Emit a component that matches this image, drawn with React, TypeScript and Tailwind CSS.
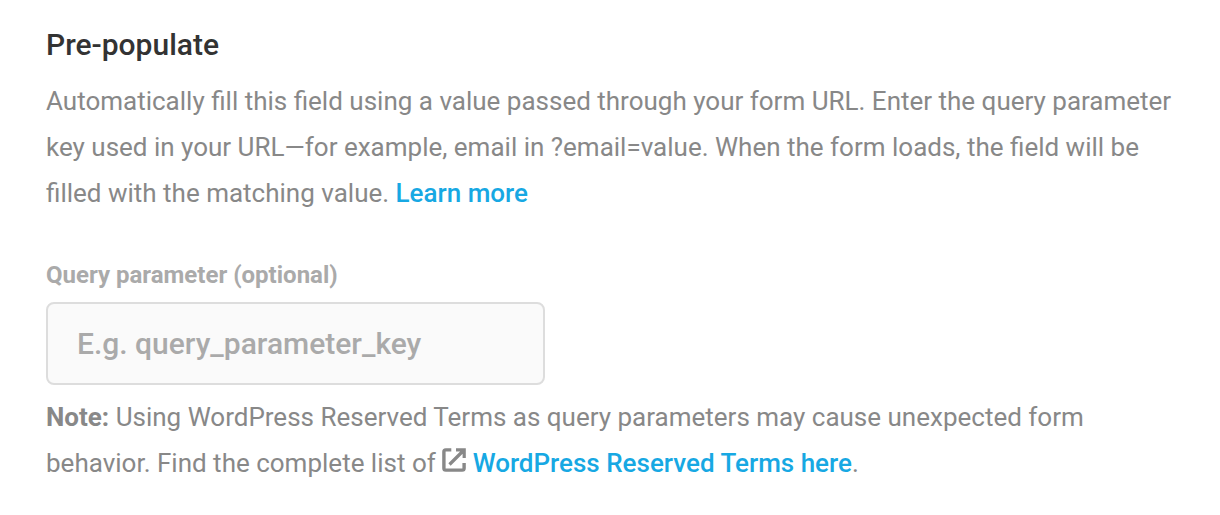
export default function App() {
  return (
    <main className="bg-white px-[46px] pt-6 pb-7 font-['Roboto',sans-serif] text-[26px] leading-[46px] text-[#888888]">
      <h2 className="text-[30px] leading-[42px] font-medium text-[#333333]">Pre-populate</h2>
      <p className="mt-3">
        Automatically fill this field using a value passed through your form URL. Enter the query parameter key used in
        your URL—for example, email in ?email=value. When the form loads, the field will be filled with the matching
        value.{' '}
        <a href="#learn-more" className="font-medium text-[#17a8e3]">
          Learn more
        </a>
      </p>
      <label htmlFor="query-parameter" className="mt-10 block text-[24px] leading-[38px] font-bold text-[#aaaaaa]">
        Query parameter (optional)
      </label>
      <input
        id="query-parameter"
        type="text"
        placeholder="E.g. query_parameter_key"
        className="mt-2 block h-[83px] w-full max-w-[499px] rounded-lg border-2 border-[#dddddd] bg-[#fafafa] px-[29px] text-[30px] font-medium text-[#333333] placeholder:text-[#aaaaaa]"
      />
      <p className="mt-[9px]">
        <strong className="font-bold">Note:</strong> Using WordPress Reserved Terms as query parameters may cause
        unexpected form behavior. Find the complete list of{' '}
        <svg viewBox="0 0 24 24" className="inline size-6 align-baseline" fill="none" stroke="currentColor" aria-hidden="true">
          <path strokeWidth="3.4" d="M9.3 1.9H3.8Q1.9 1.9 1.9 3.8V20.2Q1.9 22.1 3.8 22.1H20.2Q22.1 22.1 22.1 20.2V15" />
          <path strokeWidth="3.2" d="M14 1.8H22.2V10M21.5 2.5L7.5 16.5" />
        </svg>{' '}
        <a href="#reserved-terms" className="font-medium text-[#17a8e3]">
          WordPress Reserved Terms here
        </a>
        .
      </p>
    </main>
  );
}
